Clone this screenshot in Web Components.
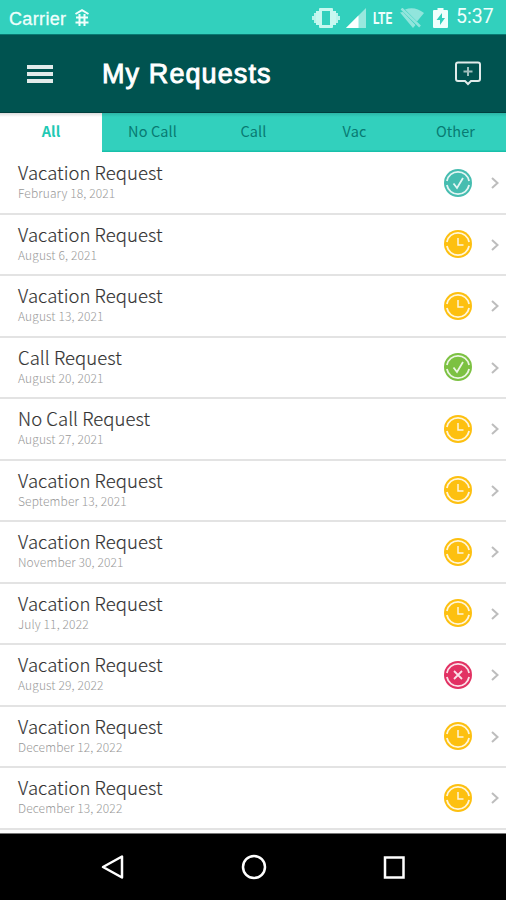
<!DOCTYPE html>
<html lang="en">
<head>
<meta charset="utf-8">
<title>My Requests</title>
<style>
  body {
    margin: 0;
    background: #fff;
    font-family: "Noto Sans CJK SC", "Noto Sans", sans-serif;
  }
</style>
</head>
<body>
<requests-app></requests-app>

<script>
class StatusBar extends HTMLElement {
  constructor() {
    super();
    this.shadowDOM = this.attachShadow({mode: 'open'});
  }

  connectedCallback() {
    this.shadowDOM.innerHTML = `
      <style>
        :host {
          display: flex;
          align-items: center;
          height: 34px;
          box-sizing: border-box;
          padding: 2px 10px 0 9px;
          background: #32d0bd;
          color: #effffc;
          font-family: "Liberation Sans", Arial, sans-serif;
          font-size: 18px;
          line-height: 20px;
        }
        svg { display: block; flex: none; }
        .carrier { width: 58px; margin-top: 1px; letter-spacing: 0.35px; white-space: nowrap; -webkit-text-stroke: 0.3px; }
        .debug { margin-left: 7px; }
        .right { display: flex; align-items: center; margin-left: auto; }
        .lte {
          width: 20px;
          margin: 0 7px 0 7px;
          font: bold 17px/18px Roboto, sans-serif;
        }
        .lte span { display: inline-block; transform: scaleX(0.7); transform-origin: 0 50%; }
        .time { width: 39px; margin-left: 9px; font-family: Roboto, sans-serif; font-size: 19.5px; white-space: nowrap; position: relative; left: -1px; top: -1px; }
      </style>
      <span class="carrier">Carrier</span>
      <svg class="debug" width="16" height="18" viewBox="0 0 16 18" fill="none" stroke="#effffc" stroke-width="2">
        <path d="M1.500 5 8 1.200l6.500 3.800M2 8.500h12M1.500 13.500h13M5.500 5v12M10.500 5v12"/>
      </svg>
      <div class="right">
        <svg width="28" height="20" viewBox="0 0 28 20">
          <path fill="#b9f4eb" d="M0 8h2V5h3v10H2v-3H0zM28 8h-2V5h-3v10h3v-3h2z"/>
          <path fill="#c8f8f0" fill-rule="evenodd" d="M8 0h12q1 0 1 1v2h3v14h-3v2q0 1-1 1H8q-1 0-1-1v-2H4V3h3V1q0-1 1-1zM10 3v14h8V3z"/>
        </svg>
        <svg style="margin-left:6px" width="20" height="20" viewBox="0 0 20 20">
          <path fill="#98e8de" d="M0 20 20 0v20z"/>
          <path fill="#fff" d="M0 20 12.500 7.500V20z"/>
        </svg>
        <div class="lte"><span>LTE</span></div>
        <svg width="24" height="20" viewBox="0 0 24 20">
          <path fill="#91e5dc" d="M5 1.500Q15-2 24 5L17 13.500zM0 4.500l13 15.500 2.500-3L3 4z"/>
          <path stroke="#91e5dc" stroke-width="2.500" d="M1.500.500 20 18.500"/>
        </svg>
        <svg style="margin-left:9px" width="15" height="20" viewBox="0 0 15 20">
          <path fill="#effffc" d="M4.500 0h6v2H14q1 0 1 1v16q0 1-1 1H1q-1 0-1-1V3q0-1 1-1h3.500z"/>
          <path fill="#32d0bd" d="M9 5 3.500 12H7v5l5-7H9z"/>
        </svg>
        <span class="time">5:37</span>
      </div>
    `;
  }
}
customElements.define('status-bar', StatusBar);

class AppHeader extends HTMLElement {
  constructor() {
    super();
    this.shadowDOM = this.attachShadow({mode: 'open'});
  }

  connectedCallback() {
    this.shadowDOM.innerHTML = `
      <style>
        :host {
          display: flex;
          align-items: center;
          height: 79px;
          box-sizing: border-box;
          padding: 0 25px 0 27px;
          background: #005350;
          border-top: 1px solid #087a72;
          border-bottom: 1px solid #003f3e;
        }
        svg { display: block; flex: none; }
        h1 {
          flex: 1;
          margin: 0 0 0 49px;
          color: #fff;
          font: 27px/32px "Liberation Sans", Arial, sans-serif;
          letter-spacing: 1.1px;
          -webkit-text-stroke: 0.9px #fff;
        }
      </style>
      <svg width="26" height="20" viewBox="0 0 26 20" fill="#e2ebea">
        <path d="M0 1h26v4H0zM0 8h26v4H0zM0 15h26v4H0z"/>
      </svg>
      <h1><slot></slot></h1>
      <svg width="26" height="26" viewBox="0 0 26 26" fill="none" stroke="#e0ebea" stroke-width="2">
        <path d="M3 1.500h20q2 0 2 2V18q0 2-2 2h-7L13 23l-3-3H3q-2 0-2-2V3.500q0-2 2-2z"/>
        <path stroke="#9fbfbd" d="M13 6v9M8.500 10.500h9"/>
      </svg>
    `;
  }
}
customElements.define('app-header', AppHeader);

class TabItem extends HTMLElement {
  constructor() {
    super();
    this.shadowDOM = this.attachShadow({mode: 'open'});
  }

  connectedCallback() {
    this.shadowDOM.innerHTML = `
      <style>
        :host {
          display: block;
          flex: 1;
          height: 39px;
          box-sizing: border-box;
          background: linear-gradient(#2bb5a6, #32d0bd 4px, #32d0bd 37px, #18c0aa 38px);
          color: #087a72;
          font-size: 14.5px;
          letter-spacing: 0.1px;
          line-height: 35px;
          text-align: center;
        }
        :host([active]) {
          flex: 0 0 102px;
          background: linear-gradient(#dcdcdc, #fff 4px);
          color: #1fc9b4;
          font-weight: bold;
        }
      </style>
      <slot></slot>
    `;
  }
}
customElements.define('tab-item', TabItem);

class TabBar extends HTMLElement {
  constructor() {
    super();
    this.shadowDOM = this.attachShadow({mode: 'open'});
  }

  connectedCallback() {
    this.shadowDOM.innerHTML = `
      <style>
        :host { display: flex; height: 39px; }
      </style>
      <slot></slot>
    `;
  }
}
customElements.define('tab-bar', TabBar);

// round badge: approved, accepted, pending or denied
class StatusIcon extends HTMLElement {
  constructor() {
    super();
    this.shadowDOM = this.attachShadow({mode: 'open'});
  }

  connectedCallback() {
    const check = '<path d="M9.500 14.500 13 19 19 9"/>';
    const types = {
      approved: ['#46bdb0', check],
      accepted: ['#7cc142', check],
      pending: ['#fdc010', '<path stroke-width="1.500" d="M14 8v7h5.500"/>'],
      denied: ['#e23163', '<path d="M10 10l8 8M18 10l-8 8"/>'],
    };
    const [color, mark] = types[this.getAttribute('type')];
    this.shadowDOM.innerHTML = `
      <style>
        :host { display: block; width: 28px; height: 28px; }
        svg { display: block; }
      </style>
      <svg width="28" height="28" viewBox="0 0 28 28" fill="none" stroke="#fff" stroke-opacity="0.85">
        <circle cx="14" cy="14" r="14" fill="${color}" stroke="none"/>
        <path stroke-width="1.800" d="M2.900 12a11.300 11.300 0 0 1 22.200 0M2.900 16a11.300 11.300 0 0 0 22.200 0"/>
        <g stroke-width="1.800">${mark}</g>
      </svg>
    `;
  }
}
customElements.define('status-icon', StatusIcon);

class RequestItem extends HTMLElement {
  constructor() {
    super();
    this.shadowDOM = this.attachShadow({mode: 'open'});
  }

  set request(request) {
    this._request = request;
    this.render();
  }

  render() {
    this.shadowDOM.innerHTML = `
      <style>
        :host {
          display: flex;
          align-items: center;
          height: 61.5px;
          box-sizing: border-box;
          padding: 0 7px 0 18px;
          border-bottom: 2px solid #e3e3e3;
        }
        .info { flex: 1; margin-top: -3px; }
        h2 {
          margin: 0;
          color: #333;
          font-size: 18.5px;
          font-weight: 300;
          letter-spacing: 0.05px;
          line-height: 24px;
          -webkit-text-stroke: 0.15px;
        }
        p {
          margin: 0;
          color: #999;
          font-size: 12px;
          font-weight: 300;
          letter-spacing: 0.12px;
          line-height: 18px;
        }
        svg { display: block; margin: 1px 0 0 19px; }
      </style>
      <div class="info">
        <h2>${this._request.title}</h2>
        <p>${this._request.date}</p>
      </div>
      <status-icon type="${this._request.status}"></status-icon>
      <svg width="8" height="12" viewBox="0 0 8 12" fill="none" stroke="#bdbdbd" stroke-width="2">
        <path d="M1 1l5.500 5L1 11"/>
      </svg>
    `;
  }
}
customElements.define('request-item', RequestItem);

class RequestList extends HTMLElement {
  constructor() {
    super();
    this.shadowDOM = this.attachShadow({mode: 'open'});
  }

  set requests(requests) {
    this._requests = requests;
    this.render();
  }

  render() {
    this.shadowDOM.innerHTML = `
      <style>
        :host { display: block; padding-top: 1px; }
      </style>
    `;
    this._requests.forEach(request => {
      const item = document.createElement('request-item');
      item.request = request;
      this.shadowDOM.appendChild(item);
    });
  }
}
customElements.define('request-list', RequestList);

class NavBar extends HTMLElement {
  constructor() {
    super();
    this.shadowDOM = this.attachShadow({mode: 'open'});
  }

  connectedCallback() {
    this.shadowDOM.innerHTML = `
      <style>
        :host {
          display: flex;
          align-items: center;
          justify-content: space-between;
          height: 67px;
          box-sizing: border-box;
          padding: 0 99px 1px 100px;
          border-top: 1px solid #777;
          background: #000;
        }
        svg { display: block; }
      </style>
      <svg width="26" height="26" viewBox="0 0 26 26" fill="none" stroke="#fff" stroke-width="2.500" stroke-linejoin="round">
        <path d="M22 2.500v21L3 13z"/>
      </svg>
      <svg width="26" height="26" viewBox="0 0 26 26" fill="none" stroke="#fff" stroke-width="2.500">
        <circle cx="13" cy="13" r="11"/>
      </svg>
      <svg width="26" height="26" viewBox="0 0 26 26" fill="none" stroke="#fff" stroke-width="2.500">
        <path d="M4 3.500h18.500v20H4z"/>
      </svg>
    `;
  }
}
customElements.define('nav-bar', NavBar);

class RequestsApp extends HTMLElement {
  constructor() {
    super();
    this.shadowDOM = this.attachShadow({mode: 'open'});
  }

  connectedCallback() {
    this.shadowDOM.innerHTML = `
      <style>
        :host {
          display: flex;
          flex-direction: column;
          height: 900px;
          overflow: hidden;
        }
        request-list { flex: 1; }
      </style>
      <status-bar></status-bar>
      <app-header>My Requests</app-header>
      <tab-bar>
        <tab-item active>All</tab-item>
        <tab-item>No Call</tab-item>
        <tab-item>Call</tab-item>
        <tab-item>Vac</tab-item>
        <tab-item>Other</tab-item>
      </tab-bar>
      <request-list></request-list>
      <nav-bar></nav-bar>
    `;
    this.shadowDOM.querySelector('request-list').requests = [
      {title: 'Vacation Request', date: 'February 18, 2021', status: 'approved'},
      {title: 'Vacation Request', date: 'August 6, 2021', status: 'pending'},
      {title: 'Vacation Request', date: 'August 13, 2021', status: 'pending'},
      {title: 'Call Request', date: 'August 20, 2021', status: 'accepted'},
      {title: 'No Call Request', date: 'August 27, 2021', status: 'pending'},
      {title: 'Vacation Request', date: 'September 13, 2021', status: 'pending'},
      {title: 'Vacation Request', date: 'November 30, 2021', status: 'pending'},
      {title: 'Vacation Request', date: 'July 11, 2022', status: 'pending'},
      {title: 'Vacation Request', date: 'August 29, 2022', status: 'denied'},
      {title: 'Vacation Request', date: 'December 12, 2022', status: 'pending'},
      {title: 'Vacation Request', date: 'December 13, 2022', status: 'pending'},
    ];
  }
}
customElements.define('requests-app', RequestsApp);
</script>
</body>
</html>
